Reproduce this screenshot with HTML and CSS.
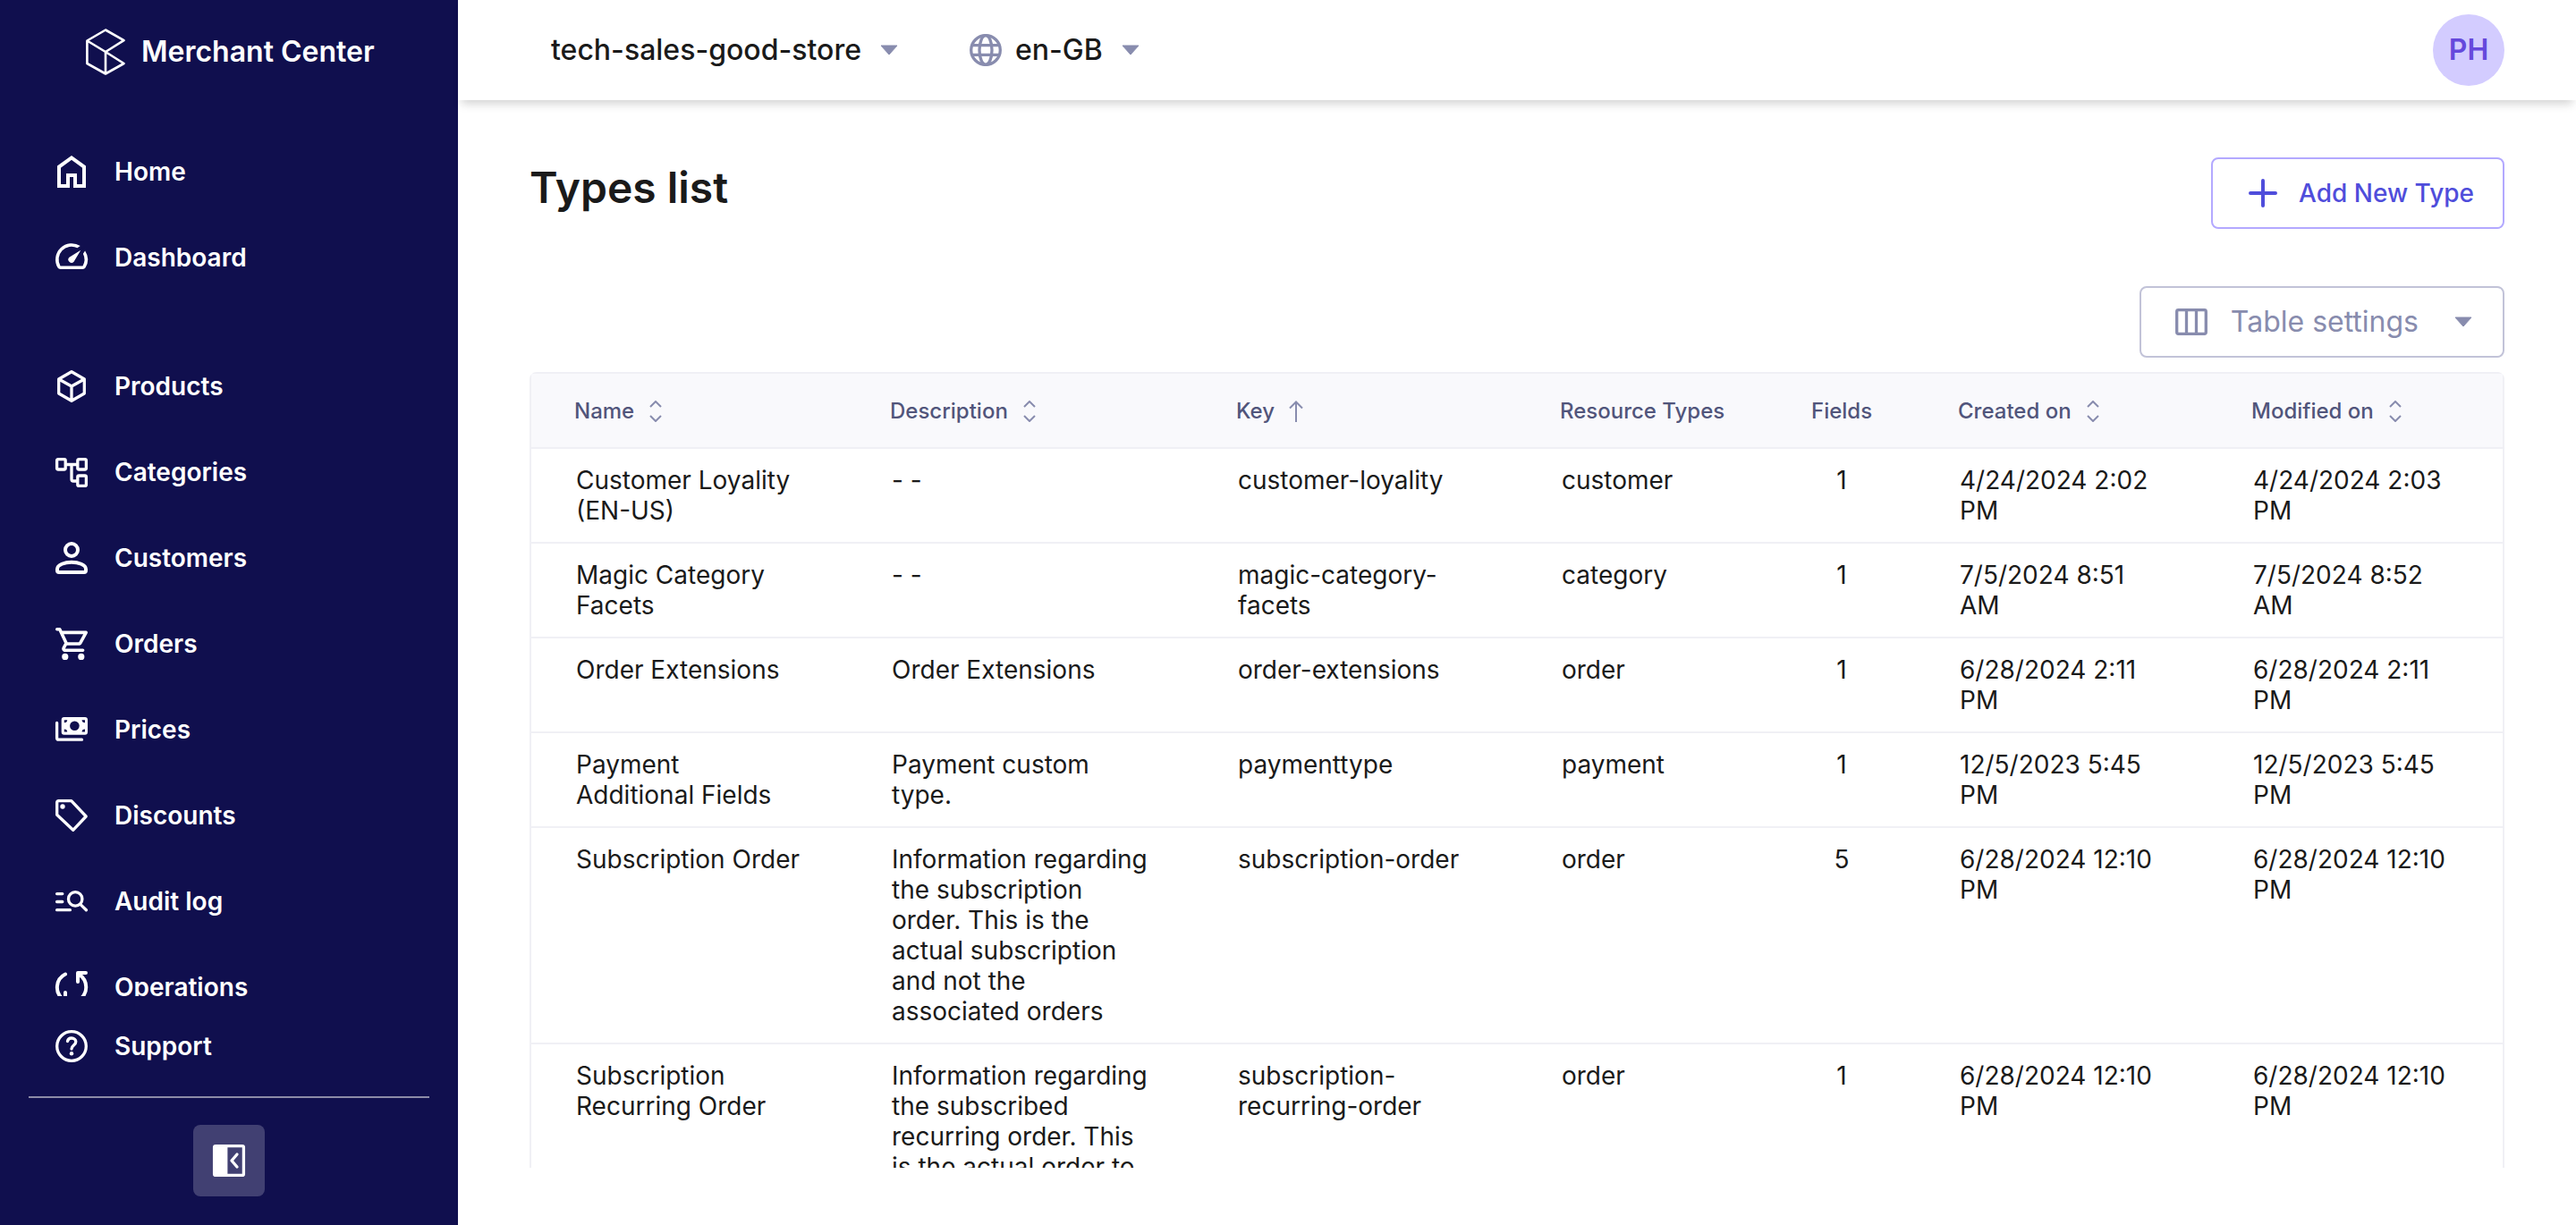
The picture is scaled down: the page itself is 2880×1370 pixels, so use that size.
FILE: index.html
```html
<!DOCTYPE html>
<html lang="en-GB">
<head>
<meta charset="utf-8">
<title>Types list - Merchant Center</title>
<link rel="stylesheet" href="styles.css">
</head>
<body>
<div class="app">
  <aside class="sidebar">
    <a class="brand" href="#">
      <svg class="brand-logo" viewBox="0 0 44 52" aria-hidden="true"><path d="M22 26 42.5 13.2 22 1.5 1.4 13.5V39L22 50.5 42.5 39 22 26 1.4 13.5M22 26v24.500"/></svg>
      <span>Merchant Center</span>
    </a>
    <nav class="menu">
      <a class="menu-item" href="#"><svg class="icon" viewBox="0 0 48 48"><path class="line-4 sharp" d="M10 40V18.600L24 8.500l14 10.100V40H28V28h-8v12z"/></svg>Home</a>
      <a class="menu-item" href="#"><svg class="icon" viewBox="0 0 48 48"><g transform="translate(2.400 1) scale(1.800)"><path class="solid" d="m20.380 8.570-1.230 1.850a8 8 0 0 1-.220 7.580H5.070A8 8 0 0 1 15.580 6.850l1.850-1.230A10 10 0 0 0 3.350 19a2 2 0 0 0 1.720 1h13.850a2 2 0 0 0 1.740-1 10 10 0 0 0-.270-10.440zm-9.790 6.840a2 2 0 0 0 2.830 0l4.300-7.200-7.130 4.370a2 2 0 0 0 0 2.830z"/></g></svg>Dashboard</a>
      <a class="menu-item group-start" href="#"><svg class="icon" viewBox="0 0 48 48"><path class="line-3" d="m24 7.700 14.300 8.300v16L24 40.300 9.700 32V16zM9.700 16 24 24l14.300-8M24 24v16"/></svg>Products</a>
      <a class="menu-item" href="#"><svg class="icon" viewBox="0 0 48 48"><path class="line-3" d="M18 15.500h12M24 15.500V32q0 2 2 2h4"/><rect class="line-3" x="7.600" y="9.600" width="9.600" height="11.400" rx="1.500"/><rect class="line-3" x="30.800" y="9.600" width="9.600" height="11.400" rx="1.500"/><rect class="line-3" x="30.800" y="28" width="9.600" height="11.400" rx="1.500"/></svg>Categories</a>
      <a class="menu-item" href="#"><svg class="icon" viewBox="0 0 48 48"><circle class="line-4" cx="24" cy="15" r="7"/><path class="line-4" d="M8 36.500c0-5 8.500-7.800 16-7.800s16 2.800 16 7.800V38a2 2 0 0 1-2 2H10a2 2 0 0 1-2-2z"/></svg>Customers</a>
      <a class="menu-item" href="#"><svg class="icon" viewBox="0 0 48 48"><g transform="translate(4.200 2.400) scale(1.800)"><path class="solid" d="M15.550 13c.750 0 1.410-.410 1.750-1.030l3.580-6.490A.996.996 0 0 0 20.010 4H5.210l-.660-1.400A1 1 0 0 0 3.640 2H2a1 1 0 0 0 0 2h1l3.600 7.590-1.350 2.440C4.520 15.370 5.480 17 7 17h11a1 1 0 0 0 0-2H7l1.100-2h7.450zM6.160 6h12.150l-2.760 5H8.530L6.160 6zM7 18a2 2 0 1 0 0 4 2 2 0 0 0 0-4zm10 0a2 2 0 1 0 0 4 2 2 0 0 0 0-4z"/></g></svg>Orders</a>
      <a class="menu-item" href="#"><svg class="icon" viewBox="0 0 48 48"><path class="line-3" d="M7.600 16.400v16.800q0 2 2 2h25.900"/><rect class="solid" x="12.700" y="10" width="29.300" height="19.700" rx="3"/><g class="cutout"><circle cx="27.400" cy="19.800" r="5.300"/><path d="M15.800 13.200h3.400q0 3-3.400 3zM39 13.200h-3.400q0 3 3.400 3zM15.800 26.500h3.400q0-3-3.400-3zM39 26.500h-3.400q0-3 3.400-3z"/></g></svg>Prices</a>
      <a class="menu-item" href="#"><svg class="icon" viewBox="0 0 48 48"><path class="line-3" d="M9.500 7.700h14.300L40.200 25 25.700 40.300 7.700 23.300V9.500q0-1.800 1.800-1.800z"/><circle class="solid" cx="14" cy="14" r="2.700"/></svg>Discounts</a>
      <a class="menu-item" href="#"><svg class="icon" viewBox="0 0 48 48"><path class="line-3" d="M7.600 15.600h6.200M7.600 24.500h6.200M7.600 33.700h14.800m12.200-5.600 5.800 5.700"/><circle class="line-3" cx="28.200" cy="21.400" r="7.700"/></svg>Audit log</a>
      <a class="menu-item" href="#"><svg class="icon" viewBox="0 0 48 48"><path class="line-4" d="M17 9.500C6 15 4.500 30 15 38M8 40h9V30M40 8h-9v10M32 9.500c11 7 11 22 0 29"/></svg>Operations</a>
    </nav>
    <div class="sidebar-foot">
      <a class="menu-item support" href="#"><svg class="icon" viewBox="0 0 48 48"><circle class="line-3" cx="24" cy="24" r="16.300"/><path class="line-3" d="M19.500 18.500c.500-2.500 2.300-3.500 4.500-3.500 2.800 0 4.800 1.700 4.800 4.100 0 4-4.800 4-4.800 8"/><circle class="solid" cx="24" cy="32.300" r="2.200"/></svg>Support</a>
      <div class="collapse">
        <button class="collapse-button" type="button" aria-label="Collapse menu"><svg class="icon" viewBox="0 0 48 48"><rect class="line-3" x="7.600" y="7.600" width="32.800" height="32.800" rx="1.500"/><path class="solid" d="M7 7h15.400v34H7z"/><path class="line-3" d="m33 17-6 7 6 7"/></svg></button>
      </div>
    </div>
  </aside>
  <div class="page">
    <header class="topbar">
      <button class="picker" type="button">tech-sales-good-store<svg class="caret" viewBox="0 0 20 12"><path d="M1 1h18l-9 10z"/></svg></button>
      <button class="picker" type="button"><svg class="globe" viewBox="0 0 36 36"><circle cx="18" cy="18" r="16.300"/><ellipse cx="18" cy="18" rx="7" ry="16.300"/><path d="M3.500 12.600h29M3.500 23.400h29"/></svg><span class="locale">en-GB</span><svg class="caret" viewBox="0 0 20 12"><path d="M1 1h18l-9 10z"/></svg></button>
      <button class="avatar" type="button">PH</button>
    </header>
    <main class="content">
      <div class="title-row">
        <h1>Types list</h1>
        <button class="add-button" type="button"><svg class="plus" viewBox="0 0 32 32"><path d="M16 2v28M2 16h28"/></svg>Add New Type</button>
      </div>
      <div class="tools">
        <button class="settings-button" type="button"><svg class="columns" viewBox="0 0 36 30"><path d="M3.500 1.700h29q1.800 0 1.800 1.800v23q0 1.800-1.800 1.800h-29q-1.800 0-1.800-1.800v-23q0-1.800 1.800-1.800zM12.500 2v26M23.500 2v26"/></svg><span>Table settings</span><svg class="caret" viewBox="0 0 20 12"><path d="M1 1h18l-9 10z"/></svg></button>
      </div>
      <div class="table-frame">
        <table class="types">
          <colgroup><col class="c-name"><col class="c-description"><col class="c-key"><col class="c-resource"><col class="c-fields"><col class="c-created"><col class="c-modified"></colgroup>
          <thead>
            <tr>
              <th><button class="sort" type="button">Name<svg class="sort-icon" viewBox="0 0 16 24"><path d="m2 7 6-6 6 6M2 17l6 6 6-6"/></svg></button></th>
              <th><button class="sort" type="button">Description<svg class="sort-icon" viewBox="0 0 16 24"><path d="m2 7 6-6 6 6M2 17l6 6 6-6"/></svg></button></th>
              <th><button class="sort" type="button">Key<svg class="sort-icon" viewBox="0 0 16 24"><path d="M1 8.500 8 1.500l7 7M8 2v22"/></svg></button></th>
              <th>Resource Types</th>
              <th>Fields</th>
              <th><button class="sort" type="button">Created on<svg class="sort-icon" viewBox="0 0 16 24"><path d="m2 7 6-6 6 6M2 17l6 6 6-6"/></svg></button></th>
              <th><button class="sort" type="button">Modified on<svg class="sort-icon" viewBox="0 0 16 24"><path d="m2 7 6-6 6 6M2 17l6 6 6-6"/></svg></button></th>
            </tr>
          </thead>
          <tbody>
            <tr><td>Customer Loyality (EN-US)</td><td>- -</td><td>customer-loyality</td><td>customer</td><td class="count">1</td><td>4/24/2024 2:02 PM</td><td>4/24/2024 2:03 PM</td></tr>
            <tr><td>Magic Category Facets</td><td>- -</td><td>magic-category-facets</td><td>category</td><td class="count">1</td><td>7/5/2024 8:51 AM</td><td>7/5/2024 8:52 AM</td></tr>
            <tr><td>Order Extensions</td><td>Order Extensions</td><td>order-extensions</td><td>order</td><td class="count">1</td><td>6/28/2024 2:11 PM</td><td>6/28/2024 2:11 PM</td></tr>
            <tr><td>Payment Additional Fields</td><td>Payment custom type.</td><td>paymenttype</td><td>payment</td><td class="count">1</td><td>12/5/2023 5:45 PM</td><td>12/5/2023 5:45 PM</td></tr>
            <tr><td>Subscription Order</td><td>Information regarding the subscription order. This is the actual subscription and not the associated orders</td><td>subscription-order</td><td>order</td><td class="count">5</td><td>6/28/2024 12:10 PM</td><td>6/28/2024 12:10 PM</td></tr>
            <tr><td>Subscription Recurring Order</td><td>Information regarding the subscribed recurring order. This is the actual order to</td><td>subscription-recurring-order</td><td>order</td><td class="count">1</td><td>6/28/2024 12:10 PM</td><td>6/28/2024 12:10 PM</td></tr>
          </tbody>
        </table>
      </div>
    </main>
  </div>
</div>
</body>
</html>
```
FILE: styles.css
```css
:root {
  --navy: #100f4e;
  --ink: #1a1a1a;
  --muted: #888cae;
  --line: #f0f0f5;
}

* { box-sizing: border-box; }

body {
  margin: 0;
  background: #fff;
  color: var(--ink);
  font-family: Inter, "Liberation Sans", sans-serif;
  font-size: 28px;
  line-height: 34px;
}

button {
  margin: 0;
  padding: 0;
  border: 0;
  background: none;
  color: inherit;
  font: inherit;
  cursor: pointer;
}

a { color: inherit; text-decoration: none; }
svg { display: block; flex: none; fill: none; }

.app {
  display: grid;
  grid-template-columns: 512px minmax(0, 1fr);
  height: 100vh;
  overflow: hidden;
}

/* Sidebar */
.sidebar {
  display: flex;
  flex-direction: column;
  min-height: 0;
  background: var(--navy);
  color: #fff;
}

.brand {
  display: flex;
  align-items: center;
  gap: 18px;
  padding: 32px 90px 60px 96px;
  font-size: 32px;
  font-weight: 600;
  white-space: nowrap;
}

.brand-logo {
  width: 44px;
  height: 52px;
  stroke: #fff;
  stroke-width: 2.6;
  stroke-linejoin: round;
}

.menu {
  flex: 1;
  min-height: 0;
  overflow: hidden;
}

.menu-item {
  display: flex;
  align-items: center;
  gap: 24px;
  padding: 24px 56px;
  font-weight: 600;
}

.group-start { margin-top: 48px; }

.icon { width: 48px; height: 48px; }
.solid { fill: #fff; }
.cutout { fill: var(--navy); }
.line-3, .line-4 {
  stroke: #fff;
  stroke-linecap: round;
  stroke-linejoin: round;
}
.line-3 { stroke-width: 3.3; }
.line-4 { stroke-width: 4; }
.sharp { stroke-linejoin: miter; }

.support { padding-top: 32px; padding-bottom: 32px; }

.collapse {
  display: flex;
  justify-content: center;
  margin: 0 32px;
  padding: 30px 0 32px;
  border-top: 2px solid #8c8ba7;
}

.collapse-button {
  padding: 16px;
  border-radius: 8px;
  background: #414072;
}

/* Top bar */
.topbar {
  display: flex;
  align-items: center;
  gap: 80px;
  padding: 16px 80px 16px 104px;
  background: #fff;
  box-shadow: 0 8px 10px -4px rgba(0, 0, 0, 0.18);
}

.picker {
  display: flex;
  align-items: center;
  font-size: 32px;
  font-weight: 500;
}

.caret { width: 20px; height: 12px; margin-left: 21px; }
.caret path {
  fill: var(--muted);
  stroke: var(--muted);
  stroke-linejoin: round;
}

.globe {
  width: 36px;
  height: 36px;
  stroke: var(--muted);
  stroke-width: 3.3;
}

.locale { margin-left: 15px; }

.avatar {
  width: 80px;
  height: 80px;
  margin-left: auto;
  border-radius: 50%;
  background: #d3ccff;
  color: #6549dc;
  font-size: 32px;
  font-weight: 600;
}

/* Content */
.page {
  display: flex;
  flex-direction: column;
  min-height: 0;
}

.content {
  display: flex;
  flex: 1;
  flex-direction: column;
  min-height: 0;
  padding: 64px 80px;
}

.title-row {
  display: flex;
  align-items: flex-start;
  justify-content: space-between;
}

h1 {
  margin: 5px 0 0;
  font-size: 48px;
  font-weight: 600;
  line-height: 58px;
}

.add-button {
  display: flex;
  align-items: center;
  gap: 24px;
  padding: 21px 32px 21px 40px;
  border: 2px solid #b3a9ff;
  border-radius: 8px;
  color: #4f4ddb;
  font-weight: 500;
}

.plus {
  width: 32px;
  height: 32px;
  stroke: #4f4ddb;
  stroke-width: 4;
  stroke-linecap: round;
}

.tools {
  display: flex;
  justify-content: flex-end;
  padding: 64px 0 16px;
}

.settings-button {
  display: flex;
  align-items: center;
  padding: 21px 34px 21px 38px;
  border: 2px solid #c2c3d8;
  border-radius: 8px;
  color: var(--muted);
  font-size: 32px;
}

.columns {
  width: 36px;
  height: 30px;
  margin-right: 26px;
  stroke: var(--muted);
  stroke-width: 3.3;
}

.settings-button .caret { margin-left: 40px; }

.table-frame {
  min-height: 0;
  overflow: hidden;
}

.types {
  width: 100%;
  border: 2px solid var(--line);
  border-radius: 8px;
  border-spacing: 0;
  table-layout: fixed;
}

.c-name { width: 353px; }
.c-description { width: 387px; }
.c-key { width: 362px; }
.c-resource { width: 281px; }
.c-fields { width: 164px; }
.c-created { width: 328px; }
.c-modified { width: 329px; }

th, td {
  border-bottom: 2px solid var(--line);
  text-align: left;
  vertical-align: top;
}

th {
  padding: 25px 0 23px 48px;
  background: #f9f9fc;
  color: #51557b;
  font-size: 24px;
  font-weight: 500;
}

td { padding: 18px 50px; }

.count { text-align: center; }

.sort {
  display: flex;
  align-items: center;
  gap: 16px;
}

.sort-icon {
  width: 16px;
  height: 24px;
  stroke: var(--muted);
  stroke-width: 2;
}
```
